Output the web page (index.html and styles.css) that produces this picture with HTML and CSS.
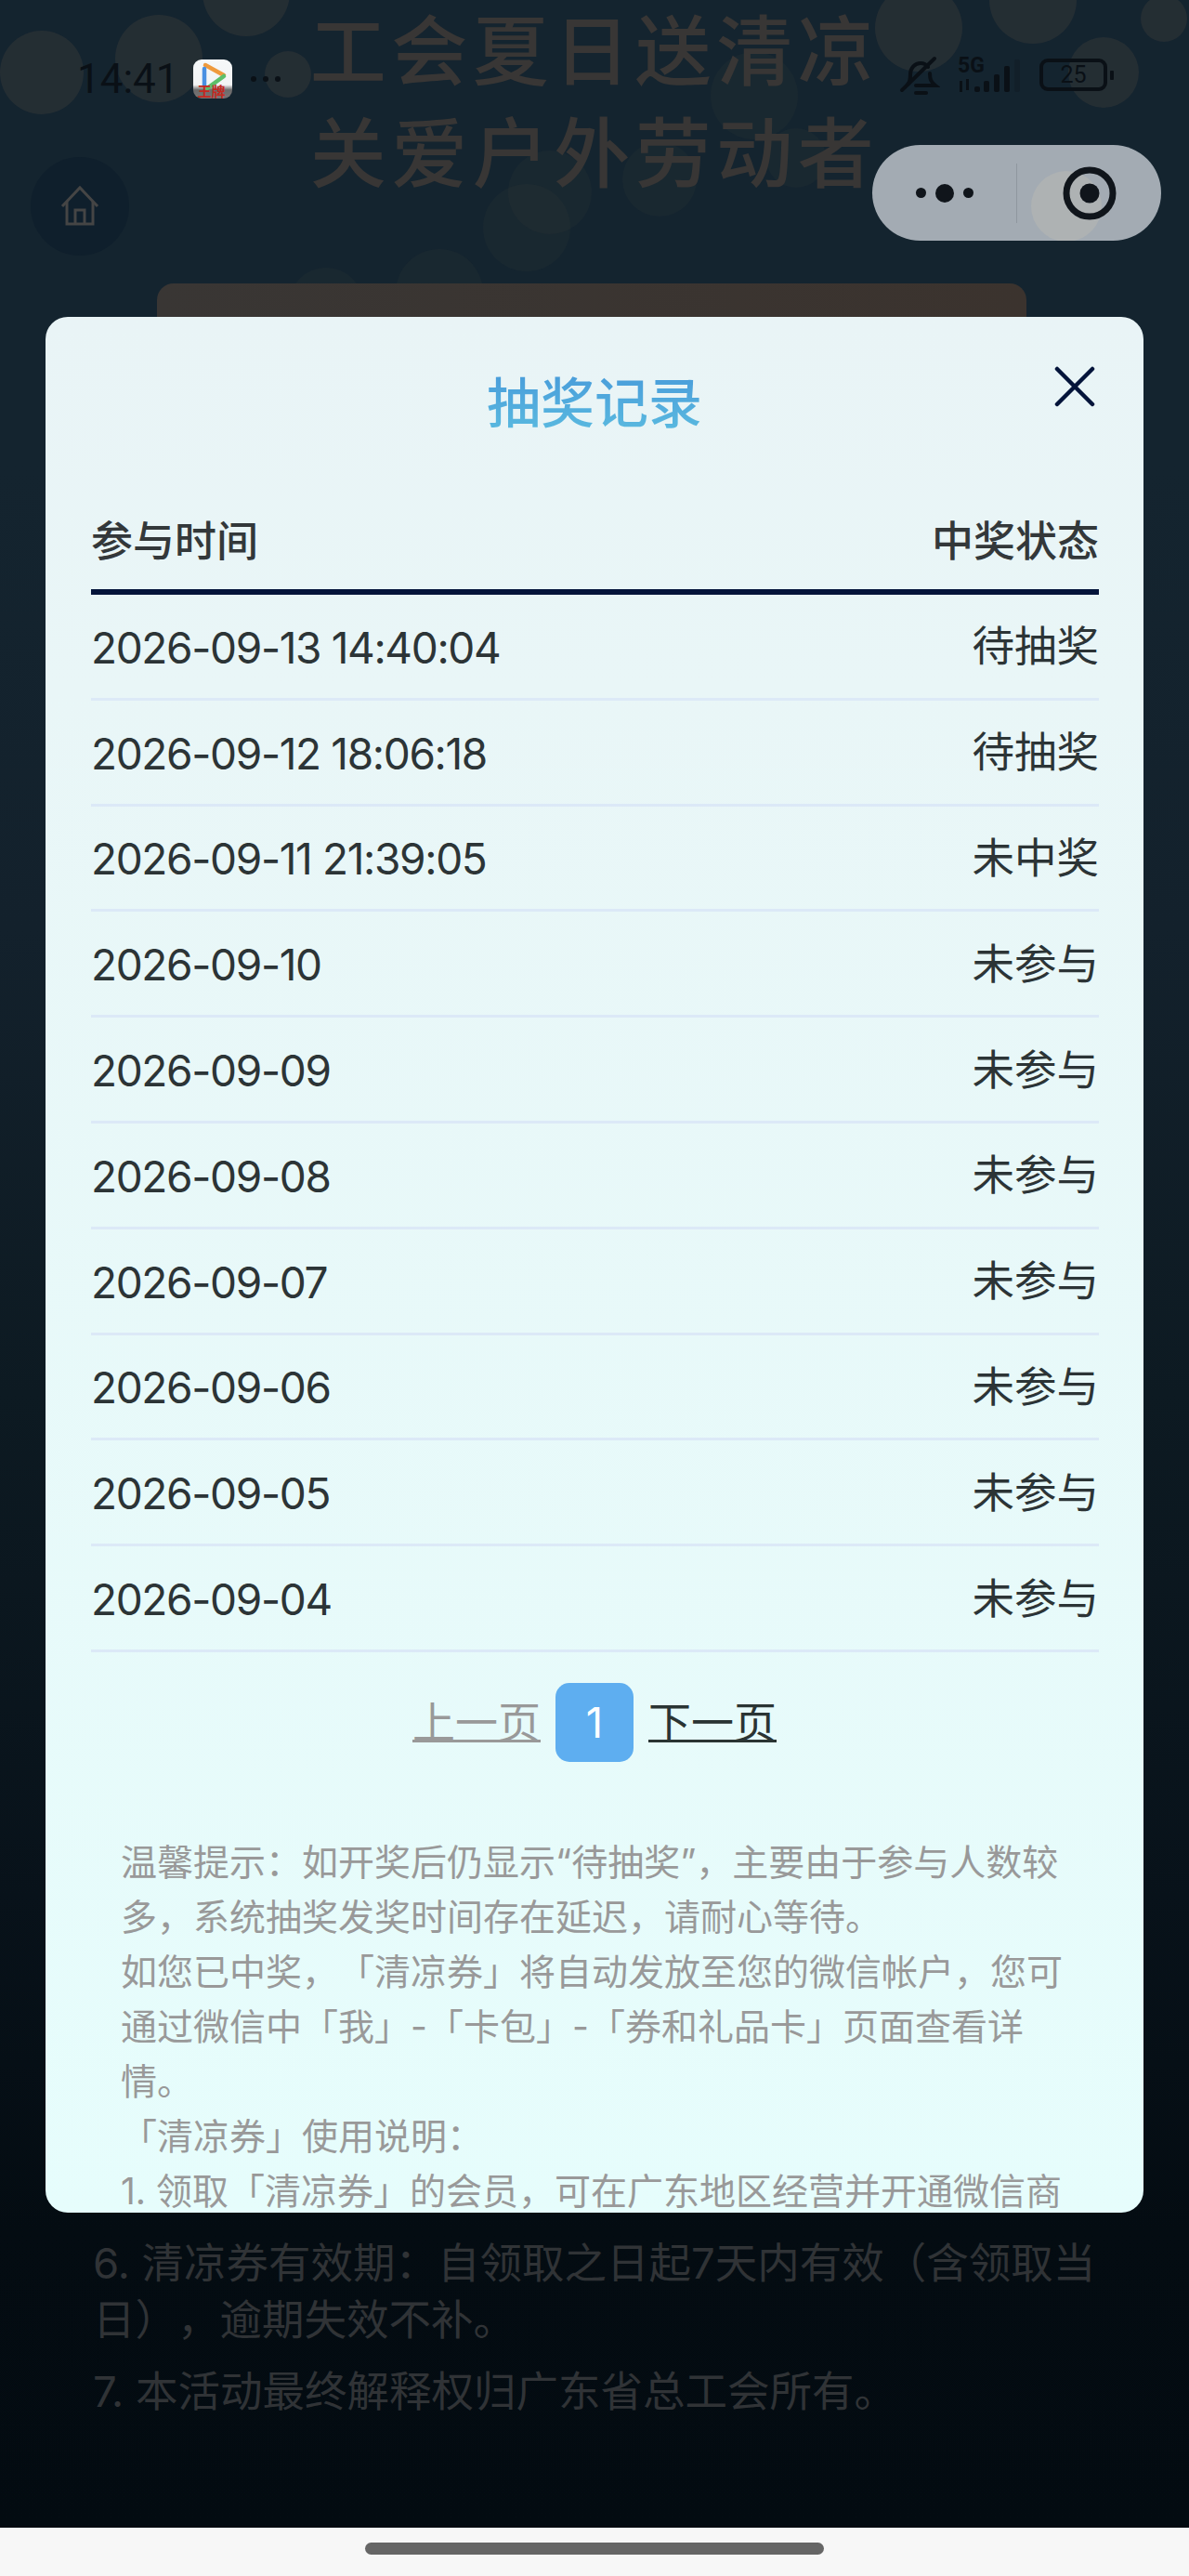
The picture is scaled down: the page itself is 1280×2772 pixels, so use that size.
FILE: index.html
```html
<!DOCTYPE html>
<html lang="zh-CN">
<head>
<meta charset="utf-8">
<title>抽奖记录</title>
<link rel="stylesheet" href="styles.css">
</head>
<body>
<div class="screen">
  <main class="page">
    <svg class="bokeh" width="1280" height="360" viewBox="0 0 1280 360" aria-hidden="true">
      <g fill="#4b463f" fill-opacity="0.3">
        <circle cx="45" cy="78" r="45"/><circle cx="171" cy="63" r="47"/><circle cx="265" cy="-8" r="47"/>
        <circle cx="310" cy="80" r="25"/><circle cx="989" cy="30" r="47"/><circle cx="1112" cy="0" r="47"/>
        <circle cx="1253" cy="20" r="25"/><circle cx="1188" cy="78" r="38"/>
      </g>
      <g fill="#4b463f" fill-opacity="0.11">
        <circle cx="812" cy="103" r="47"/>
        <circle cx="592" cy="207" r="45"/><circle cx="567" cy="245" r="47"/><circle cx="710" cy="193" r="40"/>
        <circle cx="857" cy="170" r="32"/><circle cx="473" cy="315" r="47"/><circle cx="351" cy="328" r="40"/>
      </g>
    </svg>
    <h1 class="bg-title"><span>工会夏日送清凉</span><span>关爱户外劳动者</span></h1>
    <button class="home-btn" aria-label="首页">
      <svg width="44" height="46" viewBox="0 0 44 46" fill="none" stroke="#454545" stroke-width="3">
        <path d="M3 23 22 3l19 20"/><path d="M8 18v24h28V18"/><path d="M17 42V27h10v15"/>
      </svg>
    </button>
    <div class="bg-card"></div>
    <section class="bg-rules">
      <p>6. 清凉券有效期：自领取之日起7天内有效（含领取当日），逾期失效不补。</p>
      <p>7. 本活动最终解释权归广东省总工会所有。</p>
    </section>
  </main>
  <div class="navbar"><span class="nav-pill"></span></div>

  <header class="statusbar">
    <div class="status-left">
      <span class="clock">14:41</span>
      <span class="app-icon">
        <svg width="42" height="42" viewBox="0 0 42 42" fill="none" stroke-width="4.500" stroke-linecap="round">
          <path d="M13 6 33 17" stroke="#ef9a3d"/>
          <path d="M12 10v18" stroke="#4a90e2"/>
          <path d="M15 31 33 18" stroke="#5cbf6a"/>
        </svg>
        <span class="app-label">王牌</span>
      </span>
      <span class="more-dots"><i></i><i></i><i></i></span>
    </div>
    <div class="status-right">
      <svg width="44" height="44" viewBox="0 0 44 44" fill="none" stroke="#0a1016" stroke-width="4" stroke-linecap="round">
        <path d="M9 31c3-3 3-6 3-11 0-7 5-12 11-12 3 0 6 1 8 4M33 19c0 6 1 9 6 13H18"/>
        <path d="M38 3 3 37"/><path d="M18 40h11"/>
      </svg>
      <span class="signal">
        <span class="net">5G</span>
        <svg width="74" height="38" viewBox="0 0 74 38" fill="#0a1016">
          <rect x="3" y="24" width="3" height="12"/><rect x="10" y="22" width="3" height="12"/>
          <rect x="19" y="30" width="6" height="6" rx="2"/><rect x="29" y="24" width="6" height="12" rx="2"/>
          <rect x="40" y="17" width="6" height="19" rx="2"/><rect x="51" y="8" width="6" height="28" rx="2"/>
          <rect x="62" y="1" width="6" height="35" rx="2" fill-opacity="0.25"/>
        </svg>
      </span>
      <span class="battery"><span class="battery-body">25</span><span class="battery-tip"></span></span>
    </div>
  </header>

  <div class="capsule">
    <svg class="capsule-patch" width="110" height="103" viewBox="0 0 110 103" aria-hidden="true"><circle cx="46" cy="66" r="38" fill="#aeb2b3"/></svg>
    <span class="capsule-more"><i></i><b></b><i></i></span>
    <span class="capsule-divider"></span>
    <span class="capsule-close"><svg width="58" height="58" viewBox="0 0 58 58"><circle cx="29" cy="29" r="25" fill="none" stroke="#10151b" stroke-width="7"/><circle cx="29" cy="29" r="10.500" fill="#10151b"/></svg></span>
  </div>

  <section class="modal">
    <h2 class="modal-title"><span>抽奖记录</span></h2>
    <button class="modal-close" aria-label="关闭">
      <svg width="44" height="44" viewBox="0 0 44 44" stroke="#04143a" stroke-width="4.500" stroke-linecap="round"><path d="M3 3l38 38M41 3 3 41"/></svg>
    </button>
    <div class="table">
      <div class="table-head"><span>参与时间</span><span>中奖状态</span></div>
      <ul class="rows">
        <li><span class="date">2026-09-13 14:40:04</span><span class="state">待抽奖</span></li>
        <li><span class="date">2026-09-12 18:06:18</span><span class="state">待抽奖</span></li>
        <li><span class="date">2026-09-11 21:39:05</span><span class="state">未中奖</span></li>
        <li><span class="date">2026-09-10</span><span class="state">未参与</span></li>
        <li><span class="date">2026-09-09</span><span class="state">未参与</span></li>
        <li><span class="date">2026-09-08</span><span class="state">未参与</span></li>
        <li><span class="date">2026-09-07</span><span class="state">未参与</span></li>
        <li><span class="date">2026-09-06</span><span class="state">未参与</span></li>
        <li><span class="date">2026-09-05</span><span class="state">未参与</span></li>
        <li><span class="date">2026-09-04</span><span class="state">未参与</span></li>
      </ul>
    </div>
    <nav class="pager">
      <a class="pager-link pager-off">上一页</a>
      <span class="pager-num">1</span>
      <a class="pager-link">下一页</a>
    </nav>
    <div class="notes">
      <p>温馨提示：如开奖后仍显示“待抽奖”，主要由于参与人数较多，系统抽奖发奖时间存在延迟，请耐心等待。</p>
      <p>如您已中奖，「清凉券」将自动发放至您的微信帐户，您可通过微信中「我」-「卡包」-「券和礼品卡」页面查看详情。</p>
      <p>「清凉券」使用说明：</p>
      <p>1. 领取「清凉券」的会员，可在广东地区经营并开通微信商</p>
    </div>
  </section>
</div>
</body>
</html>
```
FILE: styles.css
```css
* { box-sizing: border-box; margin: 0; padding: 0; }
html, body { width: 1280px; height: 2772px; overflow: hidden; }
body { font-family: Inter, "Noto Sans CJK SC", sans-serif; background: #f7f7f7; text-spacing-trim: space-all; }
button { background: none; border: 0; }
ul { list-style: none; }

.screen { position: relative; width: 1280px; height: 2772px; display: flex; flex-direction: column; overflow: hidden; }

/* dimmed page behind the dialog */
.page { position: relative; flex: 1; display: flex; flex-direction: column; overflow: hidden;
  background: linear-gradient(#14242f 0, #14242f 500px, #13212c 1000px, #0d1a22 1500px, #08121a 2040px, #040c12 2400px, #030b11 100%); }
.bokeh { position: absolute; left: 0; top: 0; }
.bg-title { position: relative; display: flex; flex-direction: column; gap: 10px; text-align: center; font-size: 82px; line-height: 100px; letter-spacing: 5.500px; font-weight: 500; color: #383635; font-family: "Noto Sans CJK SC", sans-serif; }
.home-btn { position: absolute; left: 33px; top: 169px; width: 106px; height: 106px; border-radius: 50%; background: #0f1f2c; display: flex; align-items: center; justify-content: center; }
.bg-card { position: absolute; left: 169px; top: 305px; width: 936px; height: 200px; border-radius: 18px; background: linear-gradient(90deg, #393634, #3b332e); }
.bg-rules { position: absolute; left: 100px; top: 2405px; width: 1095px; font-size: 45.500px; line-height: 61px; color: #303336; }
.bg-rules p { margin-bottom: 16px; }

.navbar { height: 52px; padding-top: 16px; display: flex; justify-content: center; background: #f7f7f7; }
.nav-pill { width: 494px; height: 13px; border-radius: 7px; background: #666; }

/* status bar */
.statusbar { position: absolute; left: 0; top: 56px; width: 1280px; height: 56px; }
.status-left { position: absolute; left: 83px; top: 4px; display: flex; align-items: center; }
.clock { margin-right: 15px; font-size: 44px; line-height: 50px; color: #0a1016; font-family: Roboto, sans-serif; }
.app-icon { position: relative; width: 42px; height: 42px; border-radius: 9px; overflow: hidden; background: linear-gradient(#f6f8f9 0, #f2f3f4 65%, #6b6b6b 78%, #7a7475 100%); }
.app-icon svg { display: block; }
.app-label { position: absolute; left: 5px; top: 26px; font-size: 15px; line-height: 15px; color: #c5281f; font-weight: 700; font-family: "Noto Sans CJK SC", sans-serif; }
.more-dots { display: flex; gap: 7px; margin-left: 20px; }
.more-dots i { width: 6px; height: 6px; border-radius: 50%; background: #0a1016; }
.status-right { position: absolute; left: 968px; top: 4px; display: flex; align-items: flex-start; }
.signal { position: relative; width: 74px; height: 42px; margin-left: 18px; }
.signal svg { position: absolute; left: 0; top: 3px; }
.net { position: absolute; left: 1px; top: 1px; font-size: 23px; line-height: 20px; font-weight: 700; color: #0a1016; font-family: Roboto, sans-serif; z-index: 1; }
.battery { display: flex; align-items: center; margin-left: 15px; margin-top: 3px; }
.battery-body { width: 73px; height: 35px; border: 4px solid #0a1016; border-radius: 9px; font-size: 25px; line-height: 27px; text-align: center; color: #0a1016; font-family: Roboto, sans-serif; }
.battery-tip { width: 4px; height: 10px; margin-left: 3px; background: #0a1016; border-radius: 1px; }

/* capsule */
.capsule { position: absolute; left: 939px; top: 156px; width: 311px; height: 103px; border-radius: 52px; background: #a3abb3; display: flex; align-items: center; overflow: hidden; }
.capsule-patch { position: absolute; left: 163px; top: 0; }
.capsule-more { position: relative; width: 155px; display: flex; align-items: center; justify-content: center; gap: 10px; }
.capsule-more i { width: 11px; height: 11px; border-radius: 50%; background: #10151b; }
.capsule-more b { width: 20px; height: 20px; border-radius: 50%; background: #10151b; }
.capsule-divider { width: 1px; height: 64px; background: #8f979f; }
.capsule-close { position: relative; width: 155px; display: flex; justify-content: center; }

/* dialog */
.modal { position: absolute; left: 49px; top: 341px; width: 1182px; height: 2040px; border-radius: 24px; overflow: hidden; padding: 0 49px; background: linear-gradient(#e9f4f6 0, #e9f6f7 400px, #e6fdfc 100%); }
.modal-title { height: 187px; padding-top: 51px; text-align: center; font-size: 58px; line-height: 76px; font-weight: 500; font-family: "Noto Sans CJK SC", sans-serif; }
.modal-title span { background: linear-gradient(#4596d9, #5cbde0); -webkit-background-clip: text; background-clip: text; color: transparent; }
.modal-close { position: absolute; right: 52px; top: 53px; width: 44px; height: 44px; }
.modal-close svg { display: block; }

.table { width: 1085px; }
.table-head { height: 112px; padding-top: 23px; display: flex; justify-content: space-between; font-size: 45px; line-height: 58px; font-weight: 500; color: #33383a; border-bottom: 6px solid #04143a; font-family: "Noto Sans CJK SC", sans-serif; }
.rows li { height: 113.800px; display: flex; justify-content: space-between; align-items: center; border-bottom: 3px solid #dce9f7; color: #2c3436; }
.date { font-size: 46px; letter-spacing: -1.350px; line-height: 60px; padding-top: 3px; }
.state { font-size: 45.500px; line-height: 60px; padding-top: 2px; }

.pager { display: flex; justify-content: center; align-items: center; gap: 16px; margin-top: 33px; }
.pager-link { font-size: 46px; line-height: 60px; color: #2a3433; text-decoration: underline; text-decoration-thickness: 3px; }
.pager-off { color: #999; }
.pager-num { width: 84px; height: 85px; border-radius: 15px; background: #5eaef0; color: #fff; font-size: 45px; line-height: 85px; text-align: center; }

.notes { margin-top: 78px; padding: 0 32px; font-size: 39px; line-height: 59px; color: #999; }
```
